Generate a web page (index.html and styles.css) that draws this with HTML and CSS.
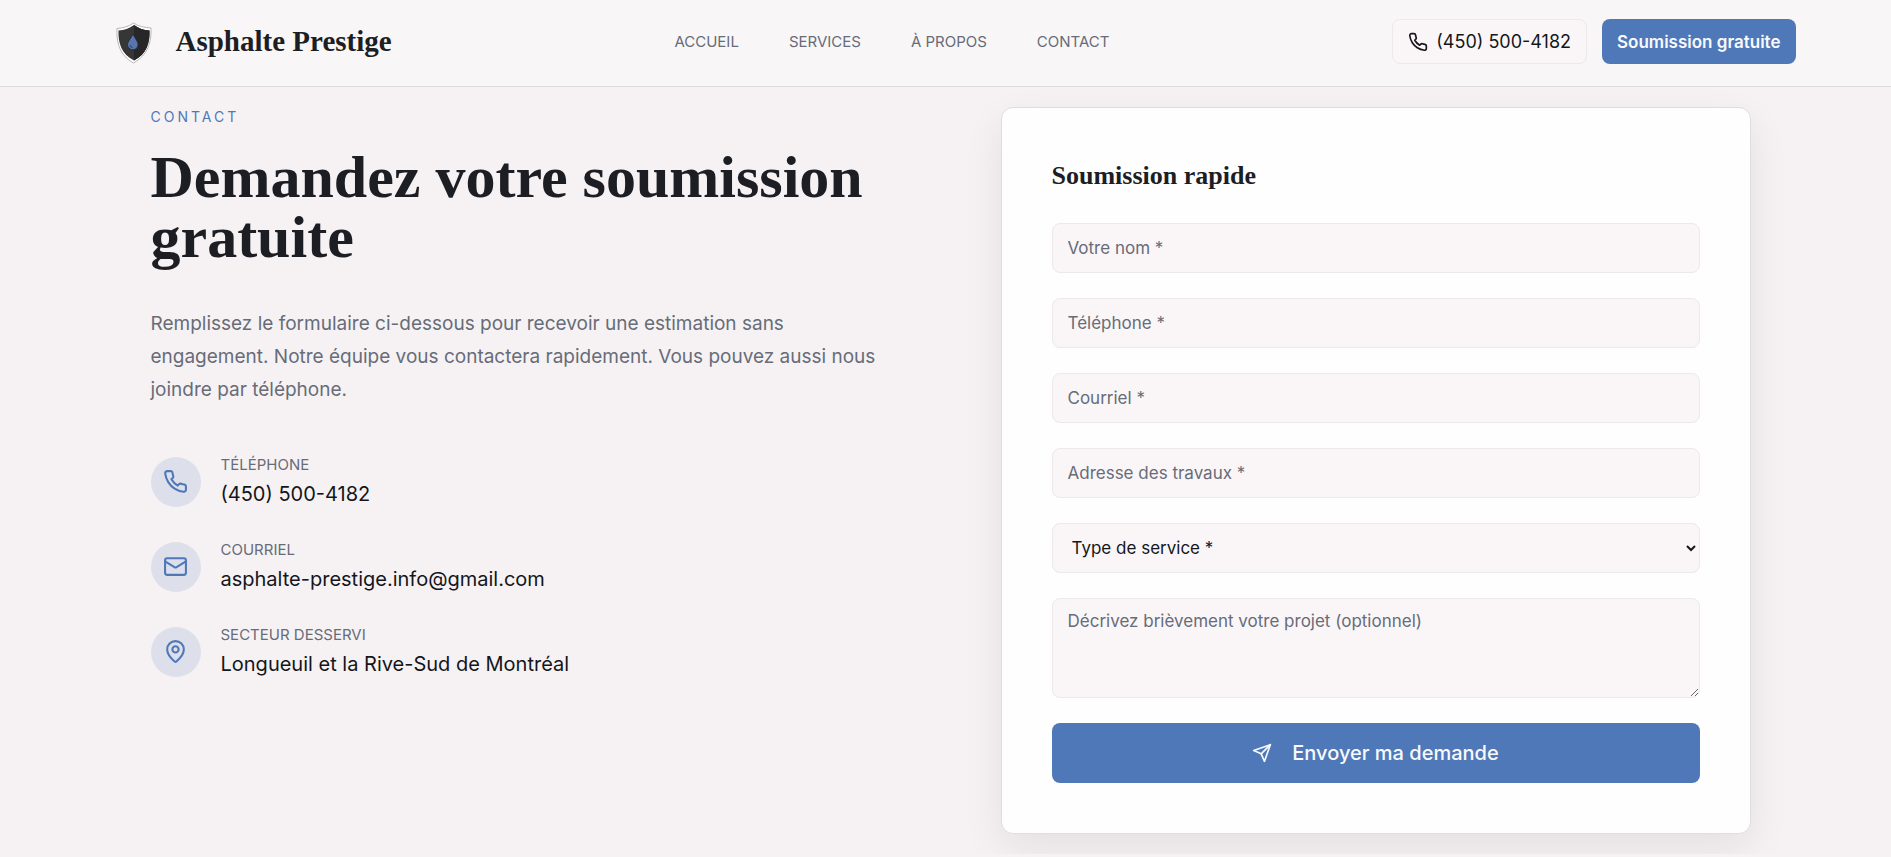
FILE: index.html
```
<!DOCTYPE html>
<html lang="fr">
<head>
  <meta charset="UTF-8">
  <meta name="viewport" content="width=device-width, initial-scale=1.0">
  <title>Asphalte Prestige - Contact</title>
  <link rel="stylesheet" href="styles.css">
</head>
<body>

  <header class="header">
    <div class="header-inner">
      <a href="#" class="logo">
        <svg class="logo-img" viewBox="0 0 75 63" aria-hidden="true">
          <path d="M37.500 13C33 16.500 27 18 21 18.500C20.500 32 23 45 37.500 53C52 45 55.500 32 55 18C49 17.500 42 16.500 37.500 13Z" fill="#fff" stroke="#a5a5a7" stroke-width="0.800"/>
          <path d="M38 15C33 18.500 28.500 20 22.500 20.500C22 32 25 44 38 50.500C51 44 54 32 53.500 20.500C47.500 20 43 18.500 38 15Z" fill="#363637"/>
          <path d="M38 15V50.500C51 44 54 32 53.500 20.500C47.500 20 43 18.500 38 15Z" fill="#272728"/>
          <path d="M37 24C35 28.500 31.500 31.500 31.500 34.500A5.300 5.300 0 0 0 42.100 34.500C42.100 31.500 39 28.500 37 24Z" fill="#5a74ac" stroke="#1d2536" stroke-width="0.800"/>
          <path d="M34 35A3 3 0 0 0 36.500 37.500" fill="none" stroke="#2b3c66" stroke-width="1"/>
        </svg>
        <span class="logo-text">Asphalte Prestige</span>
      </a>

      <nav class="nav">
        <a href="#accueil">ACCUEIL</a>
        <a href="#services">SERVICES</a>
        <a href="#apropos">À PROPOS</a>
        <a href="#contact">CONTACT</a>
      </nav>

      <div class="header-actions">
        <a href="tel:4505004182" class="btn-phone">
          <svg class="icon" viewBox="0 0 24 24" aria-hidden="true"><path d="M22 16.920v3a2 2 0 0 1-2.180 2 19.790 19.790 0 0 1-8.630-3.070 19.500 19.500 0 0 1-6-6 19.790 19.790 0 0 1-3.070-8.670A2 2 0 0 1 4.110 2h3a2 2 0 0 1 2 1.720 12.840 12.840 0 0 0 .7 2.810 2 2 0 0 1-.45 2.110L8.090 9.910a16 16 0 0 0 6 6l1.270-1.270a2 2 0 0 1 2.110-.45 12.840 12.840 0 0 0 2.810.7A2 2 0 0 1 22 16.920z"/></svg>
          (450) 500-4182
        </a>
        <a href="#contact" class="btn-cta">Soumission gratuite</a>
      </div>
    </div>
  </header>

  <section class="contact" id="contact">
    <div class="contact-info">
      <p class="eyebrow">CONTACT</p>
      <h1>Demandez votre soumission gratuite</h1>
      <p class="intro">Remplissez le formulaire ci-dessous pour recevoir une estimation sans engagement. Notre équipe vous contactera rapidement. Vous pouvez aussi nous joindre par téléphone.</p>

      <ul class="info-list">
        <li>
          <span class="info-icon">
            <svg class="icon" viewBox="0 0 24 24" aria-hidden="true"><path d="M22 16.920v3a2 2 0 0 1-2.180 2 19.790 19.790 0 0 1-8.630-3.070 19.500 19.500 0 0 1-6-6 19.790 19.790 0 0 1-3.070-8.670A2 2 0 0 1 4.110 2h3a2 2 0 0 1 2 1.720 12.840 12.840 0 0 0 .7 2.810 2 2 0 0 1-.45 2.110L8.090 9.910a16 16 0 0 0 6 6l1.270-1.270a2 2 0 0 1 2.110-.45 12.840 12.840 0 0 0 2.810.7A2 2 0 0 1 22 16.920z"/></svg>
          </span>
          <div>
            <p class="info-label">TÉLÉPHONE</p>
            <a href="tel:4505004182" class="info-value">(450) 500-4182</a>
          </div>
        </li>
        <li>
          <span class="info-icon">
            <svg class="icon" viewBox="0 0 24 24" aria-hidden="true"><rect x="2" y="4" width="20" height="16" rx="2"/><path d="m22 7-8.970 5.700a1.940 1.940 0 0 1-2.060 0L2 7"/></svg>
          </span>
          <div>
            <p class="info-label">COURRIEL</p>
            <a href="mailto:asphalte-prestige.info@gmail.com" class="info-value">asphalte-prestige.info@gmail.com</a>
          </div>
        </li>
        <li>
          <span class="info-icon">
            <svg class="icon" viewBox="0 0 24 24" aria-hidden="true"><path d="M20 10c0 4.990-5.540 10.190-7.400 11.800a1 1 0 0 1-1.200 0C9.540 20.190 4 14.990 4 10a8 8 0 0 1 16 0"/><circle cx="12" cy="10" r="3"/></svg>
          </span>
          <div>
            <p class="info-label">SECTEUR DESSERVI</p>
            <p class="info-value">Longueuil et la Rive-Sud de Montréal</p>
          </div>
        </li>
      </ul>
    </div>

    <form class="card">
      <h2>Soumission rapide</h2>
      <div class="fields">
        <input type="text" name="nom" placeholder="Votre nom *" aria-label="Votre nom" required>
        <input type="tel" name="telephone" placeholder="Téléphone *" aria-label="Téléphone" required>
        <input type="email" name="courriel" placeholder="Courriel *" aria-label="Courriel" required>
        <input type="text" name="adresse" placeholder="Adresse des travaux *" aria-label="Adresse des travaux" required>
        <select name="service" aria-label="Type de service" required>
          <option value="">Type de service *</option>
        </select>
        <textarea name="projet" placeholder="Décrivez brièvement votre projet (optionnel)" aria-label="Description du projet"></textarea>
        <button type="submit" class="btn-send">
          <svg class="icon" viewBox="0 0 24 24" aria-hidden="true"><path d="m22 2-7 20-4-9-9-4Z"/><path d="M22 2 11 13"/></svg>
          Envoyer ma demande
        </button>
      </div>
    </form>
  </section>

</body>
</html>
```
FILE: styles.css
```
* {
  box-sizing: border-box;
  margin: 0;
  padding: 0;
}

body {
  font-family: "Inter", sans-serif;
  font-size: 20px;
  background-color: #f6f2f4;
  color: #14161b;
}

a {
  color: inherit;
  text-decoration: none;
}

.icon {
  width: 20px;
  height: 20px;
  fill: none;
  stroke: currentColor;
  stroke-width: 2;
  stroke-linecap: round;
  stroke-linejoin: round;
}

/* En-tête */
.header {
  position: sticky;
  top: 0;
  background-color: #f8f6f7;
  border-bottom: 1px solid #dedde0;
  z-index: 10;
}

.header-inner {
  max-width: 1700px;
  margin: 0 auto;
  padding: 10px 0 13px;
  display: flex;
  justify-content: space-between;
  align-items: center;
}

.logo {
  display: flex;
  align-items: center;
  gap: 5px;
}

.logo-img {
  width: 75px;
  height: 63px;
}

.logo-text {
  font-family: "Liberation Serif", serif;
  font-size: 29px;
  font-weight: bold;
  color: #1c1e24;
}

.nav {
  display: flex;
  gap: 50px;
  font-size: 15px;
  color: #676c78;
}

.header-actions {
  display: flex;
  gap: 15px;
}

.btn-phone,
.btn-cta {
  display: flex;
  align-items: center;
  height: 45px;
  padding: 0 15px;
  border-radius: 8px;
}

.btn-phone {
  gap: 8px;
  font-size: 18px;
  background-color: #faf6f8;
  border: 1px solid #ece9ec;
}

.btn-cta {
  font-size: 17px;
  font-weight: 600;
  background-color: #4f78b8;
  color: #f8f9fc;
}

/* Section contact */
.contact {
  max-width: 1610px;
  margin: 0 auto;
  padding: 20px 0 20px 10px;
  display: grid;
  grid-template-columns: 1fr 1fr;
  gap: 100px;
  align-items: start;
}

.eyebrow {
  font-size: 14px;
  line-height: 20px;
  letter-spacing: 3px;
  color: #4f78b8;
  margin-bottom: 20px;
}

h1 {
  font-family: "Liberation Serif", serif;
  font-size: 60px;
  line-height: 60px;
  color: #1c1e24;
  margin-bottom: 40px;
}

.intro {
  font-size: 19px;
  line-height: 33px;
  color: #676c78;
  margin-bottom: 48px;
}

.info-list {
  list-style: none;
  display: flex;
  flex-direction: column;
  gap: 30px;
}

.info-list li {
  display: flex;
  align-items: center;
  gap: 20px;
}

.info-icon {
  width: 50px;
  height: 50px;
  border-radius: 50%;
  background-color: #dde0eb;
  color: #4f78b8;
  display: flex;
  align-items: center;
  justify-content: center;
}

.info-icon .icon {
  width: 25px;
  height: 25px;
}

.info-label {
  font-size: 15px;
  line-height: 22px;
  color: #676c78;
  margin-bottom: 3px;
}

.info-value {
  display: block;
  line-height: 30px;
}

/* Formulaire */
.card {
  background-color: #fefefe;
  border: 1px solid #dedde0;
  border-radius: 12px;
  padding: 50px;
  box-shadow: 0 15px 40px rgba(20, 20, 30, 0.08);
}

.card h2 {
  font-family: "Liberation Serif", serif;
  font-size: 26px;
  line-height: 35px;
  color: #1c1e24;
  margin-bottom: 30px;
}

.fields {
  display: flex;
  flex-direction: column;
  gap: 25px;
}

.fields input,
.fields select,
.fields textarea {
  width: 100%;
  height: 50px;
  padding: 0 15px;
  font-family: inherit;
  font-size: 17px;
  color: #14161b;
  background-color: #faf6f8;
  border: 1px solid #ece9ec;
  border-radius: 8px;
}

.fields textarea {
  height: 100px;
  padding: 10px 15px;
  line-height: 24px;
  resize: vertical;
}

.fields ::placeholder {
  color: #676c78;
}

.btn-send {
  height: 60px;
  display: flex;
  align-items: center;
  justify-content: center;
  gap: 20px;
  font-family: inherit;
  font-size: 20px;
  font-weight: 500;
  color: #f8f9fc;
  background-color: #4f78b8;
  border: none;
  border-radius: 8px;
  cursor: pointer;
}
```
